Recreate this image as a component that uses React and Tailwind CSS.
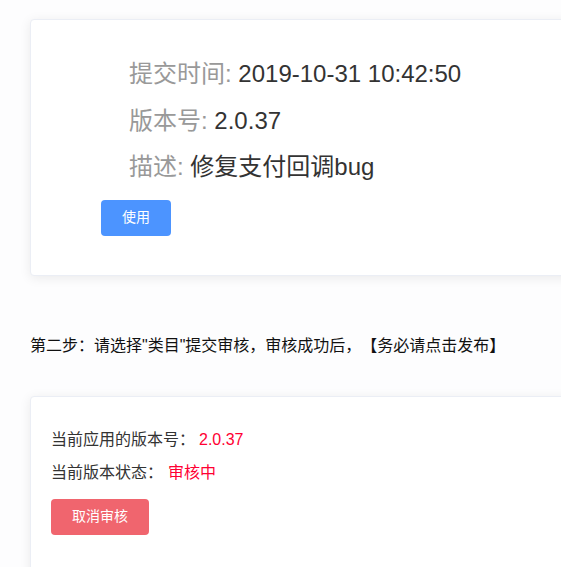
import React from "react";

// Version info card
function VersionCard() {
  return (
    <div className="ml-[30px] mt-[19px] w-[600px] rounded-[4px] border border-[#ebeef5] bg-white pl-[70px] pt-[31px] pb-[39px] shadow-[0_2px_12px_0_rgba(0,0,0,0.08)]">
      <div className="pl-[28px] text-[24px] leading-[46.5px]">
        <p>
          <span className="text-[#999]">提交时间: </span>
          <span className="text-[#333]">2019-10-31 10:42:50</span>
        </p>
        <p>
          <span className="text-[#999]">版本号: </span>
          <span className="text-[#333]">2.0.37</span>
        </p>
        <p>
          <span className="text-[#999]">描述: </span>
          <span className="text-[#333]">修复支付回调bug</span>
        </p>
      </div>
      <button className="mt-[9px] h-[36px] w-[70px] rounded-[4px] bg-[#4c94ff] text-[14px] text-white">
        使用
      </button>
    </div>
  );
}

// Review status card
function ReviewCard() {
  return (
    <div className="ml-[30px] mt-[39px] h-[200px] w-[600px] rounded-[4px] border border-[#ebeef5] bg-white pl-[20px] pt-[26px] shadow-[0_2px_12px_0_rgba(0,0,0,0.08)]">
      <p className="text-[16px] leading-[33px] text-[#333]">
        当前应用的版本号：
        <span className="ml-[4px] text-[#ff0033]">2.0.37</span>
      </p>
      <p className="text-[16px] leading-[33px] text-[#333]">
        当前版本状态：
        <span className="ml-[5px] text-[#ff0033]">审核中</span>
      </p>
      <button className="mt-[10px] h-[36px] w-[98px] rounded-[4px] bg-[#f0656e] text-[14px] text-white">
        取消审核
      </button>
    </div>
  );
}

export default function App() {
  return (
    <div
      className="h-[567px] w-[561px] overflow-hidden bg-[#fdfdfe] [text-spacing-trim:space-all]"
      style={{ fontFamily: '"Liberation Sans", "Noto Sans CJK SC", sans-serif' }}
    >
      <VersionCard />
      <p className="ml-[30px] mt-[59px] whitespace-nowrap text-[16px] leading-[22px] text-[#111]">
        第二步：请选择"类目"提交审核，审核成功后，【务必请点击发布】
      </p>
      <ReviewCard />
    </div>
  );
}
